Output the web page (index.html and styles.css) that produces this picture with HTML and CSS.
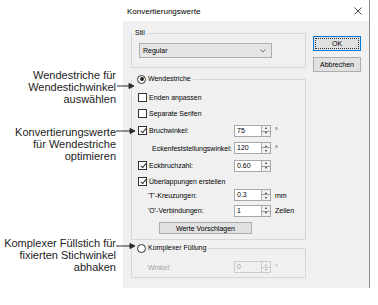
FILE: index.html
```html
<!DOCTYPE html>
<html lang="de">
<head>
    <meta charset="UTF-8">
    <title>Konvertierungswerte</title>
    <link rel="stylesheet" href="styles.css">
</head>
<body>

<div class="page">

    <div class="notes">
        <div class="note note-pick">
            Wendestriche für<br>Wendestichwinkel<br>auswählen
            <svg class="arrow" width="18" height="6" viewBox="0 0 18 6"><line x1="0" y1="3" x2="13" y2="3"/><polygon points="12,0.5 17,3 12,5.5"/></svg>
        </div>
        <div class="note note-opt">
            Konvertierungswerte<br>für Wendestriche<br>optimieren
            <svg class="arrow" width="20" height="6" viewBox="0 0 20 6"><line x1="0" y1="3" x2="15" y2="3"/><polygon points="14,0.5 19,3 14,5.5"/></svg>
        </div>
        <div class="note note-complex">
            Komplexer Füllstich für<br>fixierten Stichwinkel<br>abhaken
            <svg class="arrow" width="20" height="6" viewBox="0 0 20 6"><line x1="0" y1="3" x2="15" y2="3"/><polygon points="14,0.5 19,3 14,5.5"/></svg>
        </div>
    </div>

    <div class="dialog">
        <div class="titlebar">
            <span>Konvertierungswerte</span>
            <svg class="close" width="8" height="8" viewBox="0 0 8 8"><path d="M0.5 0.5 L7.5 7.5 M7.5 0.5 L0.5 7.5"/></svg>
        </div>

        <div class="client">
            <div class="groups">

                <fieldset class="group">
                    <legend>Stil</legend>
                    <div class="stil-body">
                        <div class="select">
                            <span>Regular</span>
                            <svg width="6" height="4" viewBox="0 0 6 4"><path d="M0.5 0.5 L3 3 L5.5 0.5"/></svg>
                        </div>
                    </div>
                </fieldset>

                <fieldset class="group group-wende">
                    <legend class="radio-legend"><span class="radio checked"></span>Wendestriche</legend>
                    <div class="rows">
                        <div class="row"><div class="lbl full"><span class="check"></span>Enden anpassen</div></div>
                        <div class="row"><div class="lbl full"><span class="check"></span>Separate Serifen</div></div>
                        <div class="row">
                            <div class="lbl"><span class="check checked"></span>Bruchwinkel:</div>
                            <div class="field">75</div><div class="spin"></div><span class="unit">°</span>
                        </div>
                        <div class="row">
                            <div class="lbl sub">Eckenfeststellungswinkel:</div>
                            <div class="field">120</div><div class="spin"></div><span class="unit">°</span>
                        </div>
                        <div class="row">
                            <div class="lbl"><span class="check checked"></span>Eckbruchzahl:</div>
                            <div class="field">0.60</div><div class="spin"></div>
                        </div>
                        <div class="row"><div class="lbl full"><span class="check checked"></span>Überlappungen erstellen</div></div>
                        <div class="row">
                            <div class="lbl sub2">'T'-Kreuzungen:</div>
                            <div class="field">0.3</div><div class="spin"></div><span class="unit">mm</span>
                        </div>
                        <div class="row">
                            <div class="lbl sub2">'O'-Verbindungen:</div>
                            <div class="field">1</div><div class="spin"></div><span class="unit">Zeilen</span>
                        </div>
                        <div class="row"><button class="btn btn-suggest">Werte Vorschlagen</button></div>
                    </div>
                </fieldset>

                <fieldset class="group group-komplex">
                    <legend class="radio-legend"><span class="radio"></span>Komplexer Füllung</legend>
                    <div class="komplex-body">
                        <div class="row disabled">
                            <div class="lbl sub2">Winkel:</div>
                            <div class="field">0</div><div class="spin"></div><span class="unit">°</span>
                        </div>
                    </div>
                </fieldset>

            </div>

            <div class="buttons">
                <button class="btn btn-default"><span>OK</span></button>
                <button class="btn">Abbrechen</button>
            </div>
        </div>
    </div>

</div>

</body>
</html>
```

FILE: styles.css
```css
body {
    margin: 0;
    background: #ffffff;
    font-family: "Liberation Sans", Arial, sans-serif;
}

.page {
    display: flex;
    width: 378px;
    height: 305px;
}

/* callouts on the left */

.notes {
    width: 116px;
    padding-right: 7px;
    flex: none;
    font-size: 11px;
    line-height: 12px;
    color: #222222;
    text-align: right;
}

.note {
    position: relative;
}

.note-pick { margin-top: 69px; }
.note-opt { margin-top: 21px; }
.note-complex { margin-top: 75px; }

.arrow {
    position: absolute;
    left: 100%;
    stroke: #2a2a2a;
    stroke-width: 1;
    fill: #2a2a2a;
}

.note-pick .arrow { top: 14px; left: calc(100% + 1px); }
.note-opt .arrow { top: 2px; }
.note-complex .arrow { top: 6px; }

/* dialog */

.dialog {
    width: 246px;
    height: 288px;
    flex: none;
    border-right: 1px solid #8c8c8c;
    font-size: 7px;
    color: #000000;
}

.titlebar {
    height: 21px;
    display: flex;
    align-items: center;
    justify-content: space-between;
    padding: 1px 7px 0 4px;
    box-sizing: border-box;
    font-size: 8px;
    background: #ffffff;
}

.close {
    stroke: #333333;
    stroke-width: 0.9;
}

.client {
    height: 267px;
    box-sizing: border-box;
    background: #f0f0f0;
    display: flex;
    gap: 7px;
    padding: 7px 0 0 8px;
}

.groups {
    width: 175px;
    flex: none;
}

.group {
    margin: 0;
    padding: 0;
    min-inline-size: 0;
    border: 1px solid #d7d7d7;
}

.group legend {
    padding: 0 3px;
    line-height: 10px;
    height: 10px;
}

.radio-legend {
    display: flex;
    align-items: center;
    gap: 2px;
}

.group .radio-legend {
    padding: 0 2px 0 5px;
}

.stil-body {
    padding: 5px 0 9px 7px;
}

.select {
    width: 133px;
    height: 15px;
    box-sizing: border-box;
    border: 1px solid #adadad;
    background: #e5e5e5;
    display: flex;
    align-items: center;
    justify-content: space-between;
    padding: 0 5px 0 3px;
}

.select svg {
    stroke: #555555;
    fill: none;
    stroke-width: 0.8;
}

.group-wende { margin-top: 6px; }
.group-komplex { margin-top: 3px; }

.rows {
    display: grid;
    grid-template-rows: 16px 17px 17px 18px 17px 14px 14px 17px 18px;
    padding: 5px 0 2px;
}

.row {
    display: grid;
    grid-template-columns: 96px 27px 10px auto;
    align-items: center;
    padding-left: 6px;
    height: 12px;
    align-self: center;
}

.lbl {
    display: flex;
    align-items: center;
    gap: 2px;
    white-space: nowrap;
}

.lbl.full { grid-column: 1 / -1; }
.lbl.sub { padding-left: 14px; }
.lbl.sub2 { padding-left: 10px; }

.check, .radio {
    width: 9px;
    height: 9px;
    box-sizing: border-box;
    border: 1px solid #333333;
    background: #ffffff;
    flex: none;
    position: relative;
}

.radio {
    border-radius: 50%;
}

.radio.checked::after {
    content: "";
    position: absolute;
    left: 1.5px;
    top: 1.5px;
    width: 4px;
    height: 4px;
    border-radius: 50%;
    background: #222222;
}

.check.checked::after {
    content: "";
    position: absolute;
    left: 2.5px;
    top: 0px;
    width: 2px;
    height: 5px;
    border: solid #333333;
    border-width: 0 0.8px 0.8px 0;
    transform: rotate(40deg);
}

.field {
    height: 12px;
    box-sizing: border-box;
    border: 1px solid #a8a8a8;
    border-right: none;
    background: #ffffff;
    padding-left: 2px;
    line-height: 10px;
}

.spin {
    height: 12px;
    box-sizing: border-box;
    border: 1px solid #a8a8a8;
    background: linear-gradient(#f0f0f0 4.5px, #9a9a9a 4.5px, #9a9a9a 5.5px, #f0f0f0 5.5px);
    position: relative;
}

.spin::before, .spin::after {
    content: "";
    position: absolute;
    left: 2.5px;
    border-left: 1.5px solid transparent;
    border-right: 1.5px solid transparent;
}

.spin::before {
    top: 1.5px;
    border-bottom: 2px solid #333333;
}

.spin::after {
    bottom: 1.5px;
    border-top: 2px solid #333333;
}

.unit {
    margin-left: 4px;
}

.row.disabled { color: #a3a3a3; }
.row.disabled .field { background: #f0f0f0; border-color: #cccccc; }
.row.disabled .spin { border-color: #cccccc; background: linear-gradient(#f0f0f0 4.5px, #c8c8c8 4.5px, #c8c8c8 5.5px, #f0f0f0 5.5px); }
.row.disabled .spin::before { border-bottom-color: #a3a3a3; }
.row.disabled .spin::after { border-top-color: #a3a3a3; }

.komplex-body {
    padding: 8px 0 4px;
}

.btn {
    font-family: "Liberation Sans", Arial, sans-serif;
    font-size: 7px;
    color: #000000;
    background: #e1e1e1;
    border: 1px solid #adadad;
    padding: 0;
    box-sizing: border-box;
}

.btn-suggest {
    grid-column: 1 / -1;
    width: 93px;
    height: 12px;
    margin-left: 21px;
}

.buttons {
    width: 48px;
    display: flex;
    flex-direction: column;
    gap: 6px;
    padding-top: 8px;
}

.buttons .btn {
    height: 15px;
}

.btn-default {
    border-color: #0078d7;
    padding: 1px;
}

.btn-default span {
    display: flex;
    align-items: center;
    justify-content: center;
    height: 100%;
    border: 1px dotted #333333;
    box-sizing: border-box;
}
```
